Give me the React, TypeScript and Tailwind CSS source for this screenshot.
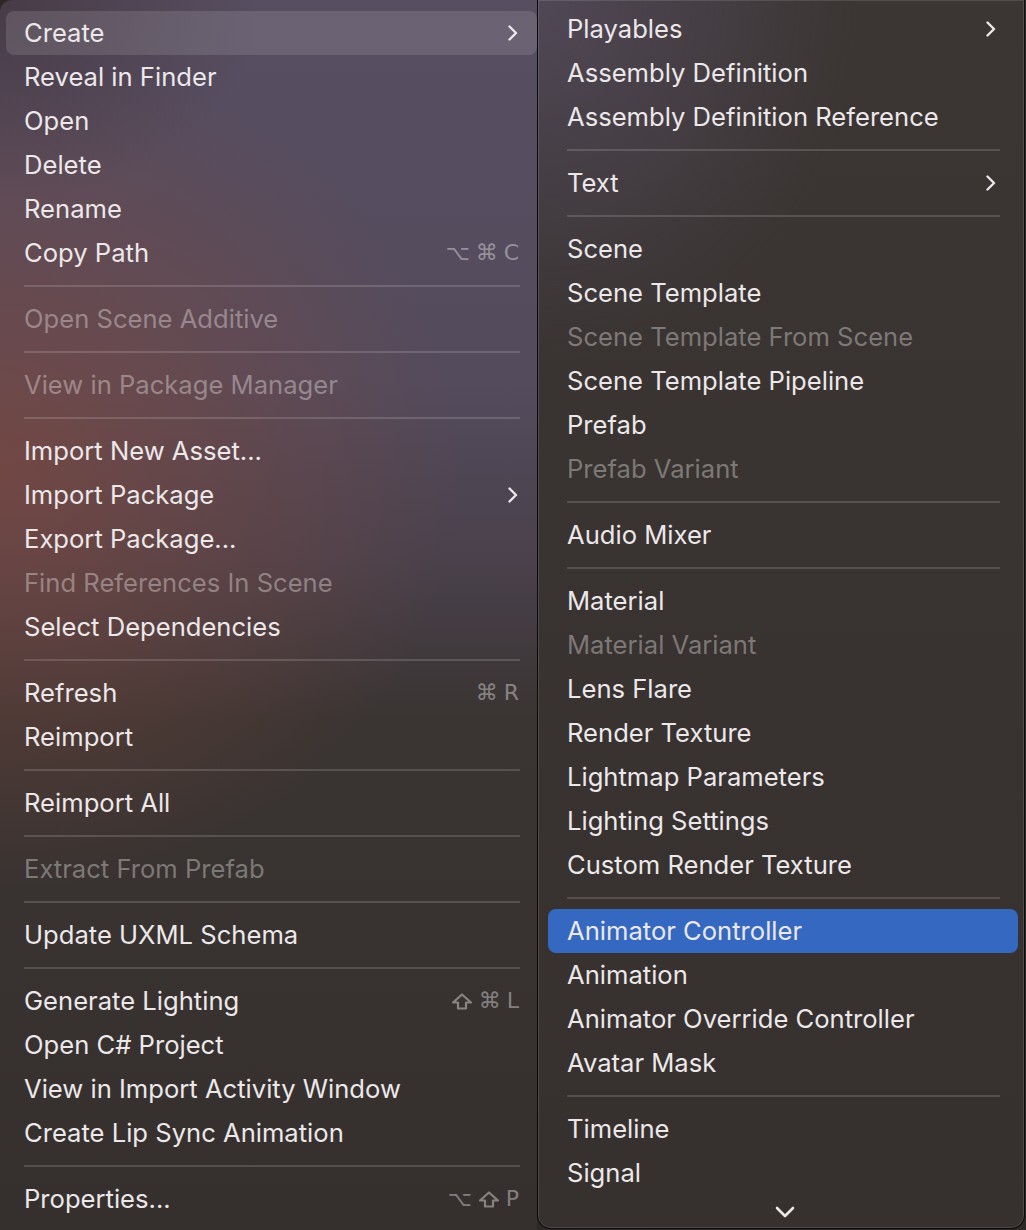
import React from "react";

type Item =
  | { sep: true }
  | {
      sep?: false;
      label: string;
      disabled?: boolean;
      active?: boolean;
      submenu?: boolean;
      keys?: string[];
    };

const leftItems: Item[] = [
  { label: "Create", active: true, submenu: true },
  { label: "Reveal in Finder" },
  { label: "Open" },
  { label: "Delete" },
  { label: "Rename" },
  { label: "Copy Path", keys: ["⌥", "⌘", "C"] },
  { sep: true },
  { label: "Open Scene Additive", disabled: true },
  { sep: true },
  { label: "View in Package Manager", disabled: true },
  { sep: true },
  { label: "Import New Asset..." },
  { label: "Import Package", submenu: true },
  { label: "Export Package..." },
  { label: "Find References In Scene", disabled: true },
  { label: "Select Dependencies" },
  { sep: true },
  { label: "Refresh", keys: ["⌘", "R"] },
  { label: "Reimport" },
  { sep: true },
  { label: "Reimport All" },
  { sep: true },
  { label: "Extract From Prefab", disabled: true },
  { sep: true },
  { label: "Update UXML Schema" },
  { sep: true },
  { label: "Generate Lighting", keys: ["⇧", "⌘", "L"] },
  { label: "Open C# Project" },
  { label: "View in Import Activity Window" },
  { label: "Create Lip Sync Animation" },
  { sep: true },
  { label: "Properties...", keys: ["⌥", "⇧", "P"] },
];

const rightItems: Item[] = [
  { label: "Playables", submenu: true },
  { label: "Assembly Definition" },
  { label: "Assembly Definition Reference" },
  { sep: true },
  { label: "Text", submenu: true },
  { sep: true },
  { label: "Scene" },
  { label: "Scene Template" },
  { label: "Scene Template From Scene", disabled: true },
  { label: "Scene Template Pipeline" },
  { label: "Prefab" },
  { label: "Prefab Variant", disabled: true },
  { sep: true },
  { label: "Audio Mixer" },
  { sep: true },
  { label: "Material" },
  { label: "Material Variant", disabled: true },
  { label: "Lens Flare" },
  { label: "Render Texture" },
  { label: "Lightmap Parameters" },
  { label: "Lighting Settings" },
  { label: "Custom Render Texture" },
  { sep: true },
  { label: "Animator Controller", active: true },
  { label: "Animation" },
  { label: "Animator Override Controller" },
  { label: "Avatar Mask" },
  { sep: true },
  { label: "Timeline" },
  { label: "Signal" },
];

function Chevron() {
  return (
    <svg width="12" height="16" viewBox="0 0 12 16" fill="none">
      <path
        d="M2.5 1.5 L9 8 L2.5 14.5"
        stroke="currentColor"
        strokeWidth="2.4"
        strokeLinecap="round"
        strokeLinejoin="round"
      />
    </svg>
  );
}

// outlined shift arrow, the font glyph is too thin
function ShiftKey() {
  return (
    <svg width="22" height="17" viewBox="0 0 22 17" fill="none">
      <path
        d="M11 1.5 L20 9.5 L15 9.5 L15 15.5 L7 15.5 L7 9.5 L2 9.5 Z"
        stroke="currentColor"
        strokeWidth="2.2"
        strokeLinejoin="round"
      />
    </svg>
  );
}

function MenuList({ items, side }: { items: Item[]; side: "left" | "right" }) {
  const left = side === "left";
  return (
    <>
      {items.map((it, i) => {
        if (it.sep) {
          return (
            <div key={i} className="flex h-[22px] items-center">
              <div
                className={
                  left
                    ? "ml-[18px] mr-[17px] h-[2px] flex-1 bg-white/15"
                    : "ml-[19px] mr-[18px] h-[2px] flex-1 bg-white/15"
                }
              />
            </div>
          );
        }
        const bg = it.active
          ? left
            ? "bg-white/[0.12]"
            : "bg-[#3568c0]"
          : "";
        const color = it.disabled ? "text-white/35" : "text-[#ece8ea]";
        return (
          <div
            key={i}
            className={`flex h-[44px] items-center rounded-[8px] ${bg} ${color} ${
              left ? "pl-[18px] pr-[18px]" : "pl-[19px] pr-[21px]"
            }`}
          >
            <span className="flex-1 whitespace-nowrap leading-[32px]">{it.label}</span>
            {it.submenu && (
              <span className="text-[#ece8ea]">
                <Chevron />
              </span>
            )}
            {it.keys && (
              <span className="flex items-center gap-[6px] font-['DejaVu_Sans',sans-serif] text-[22px] leading-[32px] text-white/40">
                {it.keys.map((k, j) =>
                  k === "⇧" ? (
                    <ShiftKey key={j} />
                  ) : (
                    <span key={j} className={k === "⌥" ? "text-[21px]" : ""}>
                      {k}
                    </span>
                  )
                )}
              </span>
            )}
          </div>
        );
      })}
    </>
  );
}

export default function App() {
  return (
    <div className="relative flex h-[1230px] w-[1026px] overflow-hidden bg-[#2c2826] font-['Inter','DejaVu_Sans',sans-serif] text-[25.6px] antialiased">
      <div className="flex h-full w-[537px] shrink-0 flex-col rounded-tl-[12px] bg-[radial-gradient(ellipse_260px_200px_at_0px_0px,rgba(60,44,50,0.55),transparent),radial-gradient(ellipse_460px_420px_at_0px_470px,rgba(125,72,62,0.75),transparent),linear-gradient(to_bottom,#574e61_0px,#544b5d_380px,#4a414c_560px,#3a3432_720px,#35302e_1230px)] pl-[6px] pt-[11px]">
        <MenuList items={leftItems} side="left" />
      </div>

      {/* Right submenu */}
      <div className="flex h-[1229px] w-[488px] shrink-0 flex-col rounded-b-[14px] border border-t-0 border-black/80 bg-[radial-gradient(ellipse_320px_360px_at_0px_0px,rgba(88,78,98,0.75),transparent),linear-gradient(to_bottom,#3b3533,#36302e)] pl-[10px] pr-[6px] pt-[7px] shadow-[inset_0_0_0_1px_rgba(255,255,255,0.12)]">
        <MenuList items={rightItems} side="right" />
        <div className="flex flex-1 items-center justify-center pl-[4px] text-[#ece8ea]">
          <svg width="20" height="12" viewBox="0 0 20 12" fill="none">
            <path
              d="M2 2 L10 10 L18 2"
              stroke="currentColor"
              strokeWidth="2.6"
              strokeLinecap="round"
              strokeLinejoin="round"
            />
          </svg>
        </div>
      </div>
    </div>
  );
}
